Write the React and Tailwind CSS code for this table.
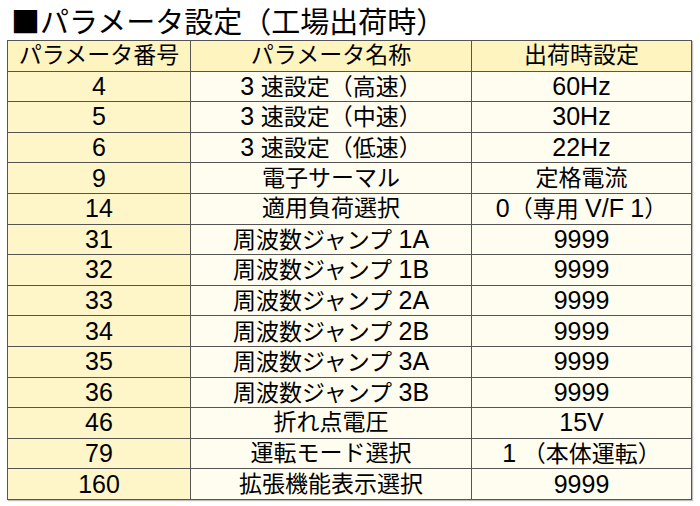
const ROWS = [
  ['4', '3 速設定（高速）', '60Hz'],
  ['5', '3 速設定（中速）', '30Hz'],
  ['6', '3 速設定（低速）', '22Hz'],
  ['9', '電子サーマル', '定格電流'],
  ['14', '適用負荷選択', '0（専用 V/F 1）'],
  ['31', '周波数ジャンプ 1A', '9999'],
  ['32', '周波数ジャンプ 1B', '9999'],
  ['33', '周波数ジャンプ 2A', '9999'],
  ['34', '周波数ジャンプ 2B', '9999'],
  ['35', '周波数ジャンプ 3A', '9999'],
  ['36', '周波数ジャンプ 3B', '9999'],
  ['46', '折れ点電圧', '15V'],
  ['79', '運転モード選択', '1 （本体運転）'],
  ['160', '拡張機能表示選択', '9999'],
]

const FONT = { fontFamily: '"Liberation Sans", "Noto Sans CJK JP", sans-serif' }
const CJK = { fontFamily: '"Noto Sans CJK JP", sans-serif' }

// latin runs are set a bit larger, like the reference's wide digits
function Mixed({ text }) {
  const parts = text.split(/([A-Za-z0-9/]+)/)
  return parts.map((p, i) =>
    /^[A-Za-z0-9/]+$/.test(p)
      ? <span key={i} className="text-[25px]">{p}</span>
      : <span key={i}>{p}</span>
  )
}

export default function App() {
  return (
    <div className="w-[700px] h-[506px] bg-white text-black" style={FONT}>
      {/* Title */}
      <h1 className="pl-[11px] text-[29px] leading-[40px] font-normal whitespace-nowrap" style={CJK}>
        ■パラメータ設定（工場出荷時）
      </h1>

      <div className="pl-[7px]">
        <table className="border-collapse w-[685px] border-[1.5px] border-[#3a3a3a] shadow-[1px_1px_1px_rgba(0,0,0,0.25)] text-[23px] leading-none">
          <thead>
            <tr className="h-[30.6px] bg-[#fdf4c0]">
              <th className="w-[183px] font-normal border border-[#555] text-center">パラメータ番号</th>
              <th className="w-[281px] font-normal border border-[#555] text-center">パラメータ名称</th>
              <th className="font-normal border border-[#555] text-center">出荷時設定</th>
            </tr>
          </thead>
          <tbody>
            {ROWS.map(([no, name, value]) => (
              <tr key={no} className="h-[30.6px]">
                <td className="border border-[#555] text-center bg-[#fef6c9]"><Mixed text={no} /></td>
                <td className="border border-[#555] text-center bg-[#fffdf0]"><Mixed text={name} /></td>
                <td className="border border-[#555] text-center bg-[#fffdf0]"><Mixed text={value} /></td>
              </tr>
            ))}
          </tbody>
        </table>
      </div>
    </div>
  )
}
